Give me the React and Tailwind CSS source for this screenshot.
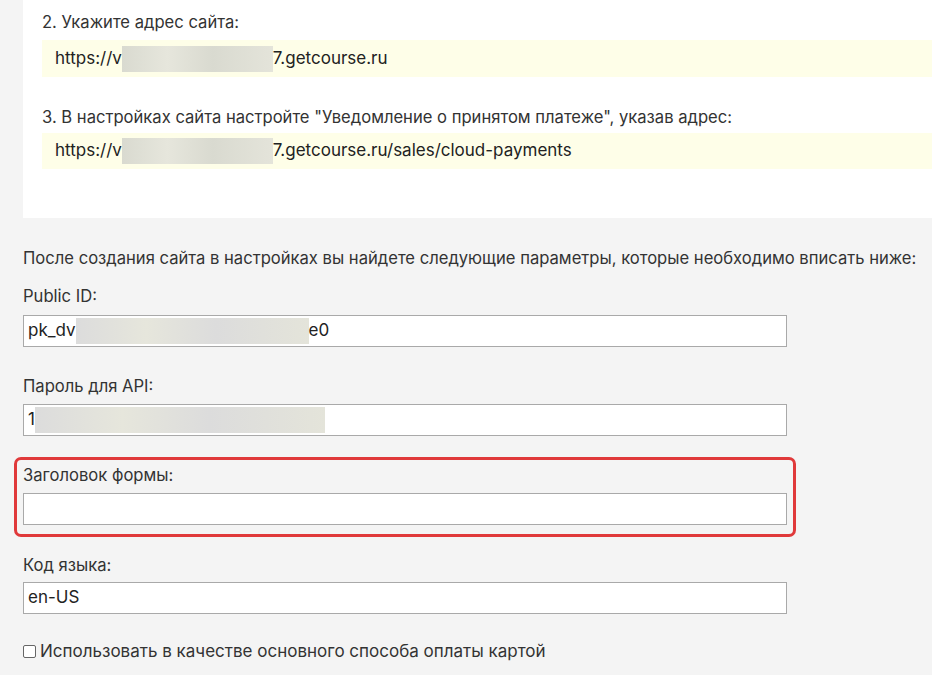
export default function App() {
  const f = { fontFamily: "Inter, 'Noto Sans', sans-serif" };
  const Blur = ({ w, c = "#d9dad0" }) => (
    <span className="inline-block h-[26px] align-middle" style={{ width: w, background: `linear-gradient(90deg, ${c}, #e6e6dc 30%, ${c} 60%, #e4e4da)` }} />
  );
  const Input = ({ children }) => (
    <div className="w-[764px] h-[32px] bg-white border border-[#a9a9a9] flex items-center px-[4px] text-[17px] text-[#222]">{children}</div>
  );
  return (
    <div className="w-[932px] h-[675px] bg-[#f4f4f4] overflow-hidden text-[#333]" style={f}>
      <div className="ml-[23px] bg-white h-[218px] pl-[19px] pt-[10px]">
        <div className="text-[16.6px] h-[30px] leading-[24px]">2. Укажите адрес сайта:</div>
        <div className="h-[37px] bg-[#fefee8] flex items-center pl-[13px] text-[17px] text-[#222]">https://v<Blur w={151} />7.getcourse.ru</div>
        <div className="h-[56px] pt-[28px] text-[16.6px] leading-[24px]">3. В настройках сайта настройте "Уведомление о принятом платеже", указав адрес:</div>
        <div className="h-[36px] bg-[#fefee8] flex items-center pl-[13px] text-[17px] text-[#222]">https://v<Blur w={151} />7.getcourse.ru/sales/cloud-payments</div>
      </div>
      <div className="pl-[23px] text-[16.6px]">
        <div className="pt-[28px] leading-[24px] whitespace-nowrap">После создания сайта в настройках вы найдете следующие параметры, которые необходимо вписать ниже:</div>
        <div className="mt-[14px] leading-[24px]">Public ID:</div>
        <div className="mt-[7px]"><Input>pk_dv<Blur w={233} c="#dcdcdc" />e0</Input></div>
        <div className="mt-[27px] leading-[24px]">Пароль для API:</div>
        <div className="mt-[6px]"><Input>1<Blur w={290} c="#dcdcdc" /></Input></div>
        <div className="-ml-[9px] mt-[21px] w-[782px] h-[80px] border-[3px] border-[#e0393a] rounded-[7px] pl-[6px] pt-[3px]">
          <div className="leading-[24px]">Заголовок формы:</div>
          <div className="mt-[6px]"><Input /></div>
        </div>
        <div className="mt-[16px] leading-[24px]">Код языка:</div>
        <div className="mt-[5px]"><Input>en-US</Input></div>
        <div className="mt-[25px] flex items-center gap-[4px] text-[17px]">
          <span className="w-[13px] h-[13px] border border-[#666] rounded-[2px] bg-white" />
          Использовать в качестве основного способа оплаты картой
        </div>
      </div>
    </div>
  );
}
